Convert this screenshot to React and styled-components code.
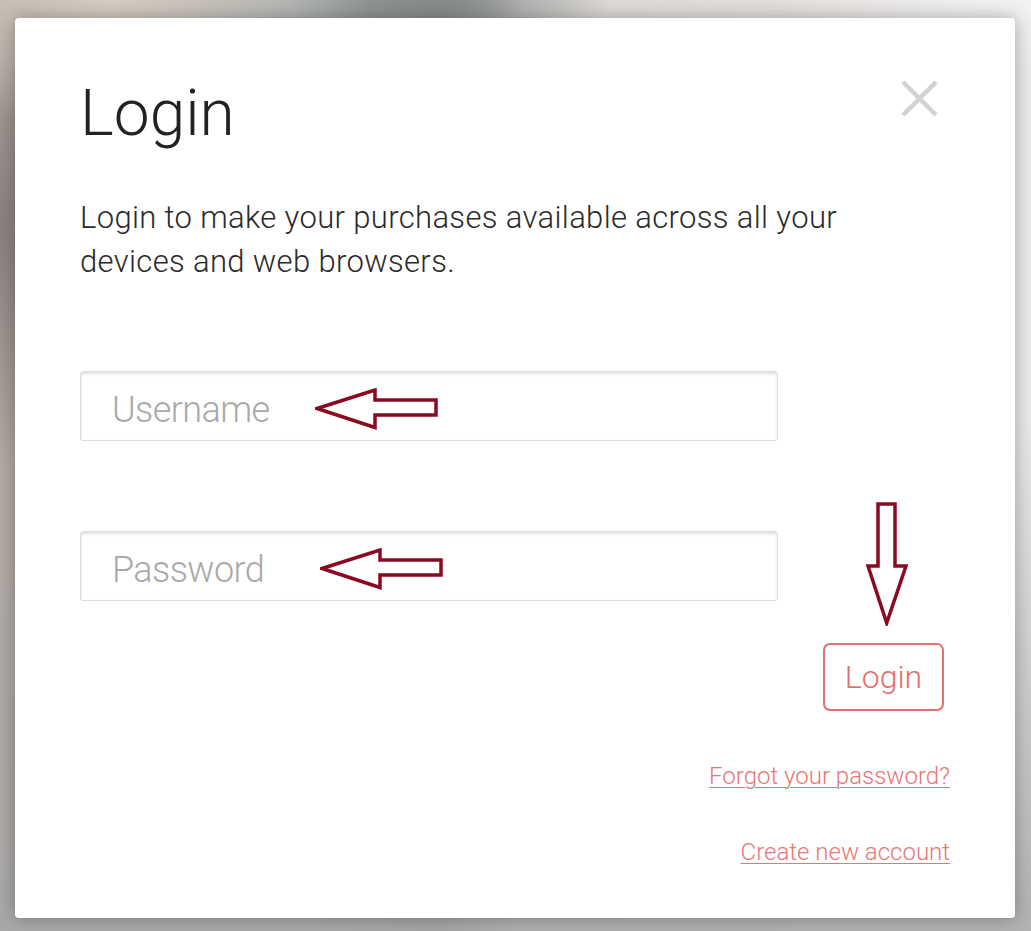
import React from 'react';
import styled, { createGlobalStyle } from 'styled-components';

const GlobalStyle = createGlobalStyle`
  html, body {
    margin: 0;
    padding: 0;
  }
  body {
    font-family: Roboto, 'Liberation Sans', sans-serif;
  }
  * {
    box-sizing: border-box;
  }
`;

const ARROW_RED = '#8b0a1f';
const LINK_RED = '#e77676';

const Page = styled.div`
  width: 1031px;
  height: 931px;
  overflow: hidden;
  padding: 18px 16px 13px 15px;
  background:
    radial-gradient(ellipse 260px 130px at 110px 0px, #d6cdc2 0%, rgba(214, 205, 194, 0) 100%),
    radial-gradient(ellipse 110px 240px at 0px 230px, #8a807e 0%, rgba(138, 128, 126, 0) 100%),
    radial-gradient(ellipse 170px 70px at 440px 0px, #868b8b 0%, rgba(134, 139, 139, 0) 100%),
    radial-gradient(ellipse 260px 80px at 1031px 0px, #f2f2f2 0%, rgba(242, 242, 242, 0) 100%),
    linear-gradient(180deg, rgba(160, 160, 160, 0) 0px, rgba(160, 160, 160, 0) 420px, rgba(168, 168, 168, 0.85) 931px),
    linear-gradient(90deg, #b4aaa4 0px, #a6adb0 300px, #8f9192 440px, #dcd8d5 520px, #e5e1df 900px, #e9e9e9 1031px);
`;

const Modal = styled.div`
  width: 1000px;
  height: 900px;
  background: #fff;
  border-radius: 4px;
  box-shadow: 0 0 18px rgba(0, 0, 0, 0.3);
  padding: 62px 65px 0;
  display: flex;
  flex-direction: column;
`;

const Header = styled.div`
  display: flex;
  justify-content: space-between;
  align-items: flex-start;
`;

const Title = styled.h1`
  margin: 0;
  font-size: 64px;
  line-height: 67px;
  font-weight: 300;
  color: #222;
`;

const CloseButton = styled.button`
  border: 0;
  background: none;
  padding: 0;
  margin: 0 12px 0 0;
  width: 37px;
  height: 37px;
  cursor: pointer;
  display: flex;
`;

const Description = styled.p`
  margin: 49px 0 0;
  max-width: 820px;
  font-size: 31px;
  line-height: 44px;
  letter-spacing: 0.35px;
  font-weight: 300;
  color: #2a2a2a;
`;

const Form = styled.form`
  margin-top: 87px;
  display: flex;
  flex-direction: column;
`;

const Field = styled.div`
  position: relative;
  width: 698px;
  & + & {
    margin-top: 90px;
  }
`;

const Input = styled.input`
  width: 100%;
  height: 70px;
  border: 1px solid #dcdcdc;
  border-radius: 3px;
  box-shadow: inset 0 2px 3px rgba(0, 0, 0, 0.12);
  padding: 8px 0 0 31px;
  font-family: Roboto, 'Liberation Sans', sans-serif;
  font-size: 36px;
  font-weight: 300;
  color: #333;
  outline: none;

  &::placeholder {
    color: #a9a9a9;
    letter-spacing: -0.6px;
  }
`;

const Pointer = styled.svg`
  position: absolute;
  top: 17px;
  left: ${(p) => p.$left}px;
  pointer-events: none;
`;

const Actions = styled.div`
  display: flex;
  flex-direction: column;
  align-items: flex-end;
  margin-top: 42px;
`;

const SubmitWrap = styled.div`
  position: relative;
  margin-right: 6px;
`;

const DownPointer = styled.svg`
  position: absolute;
  left: 43px;
  top: -141px;
  pointer-events: none;
`;

const SubmitButton = styled.button`
  width: 121px;
  height: 68px;
  border: 2px solid #e46f6f;
  border-radius: 7px;
  background: #fff;
  color: #e46f6f;
  font-family: Roboto, 'Liberation Sans', sans-serif;
  font-size: 32px;
  font-weight: 300;
  padding: 0;
  cursor: pointer;
`;

const TextLink = styled.a`
  display: block;
  margin-top: ${(p) => p.$gap}px;
  font-size: 24px;
  line-height: 30px;
  font-weight: 300;
  color: ${LINK_RED};
  text-decoration: underline;
  text-underline-offset: 3px;
  text-decoration-thickness: 1px;
  cursor: pointer;
`;

function LeftArrow({ left }) {
  return (
    <Pointer $left={left} width="124" height="42" viewBox="0 0 124 42">
      <polygon
        points="2,20.5 60,2 60,12 121,12 121,27 60,27 60,39.5"
        fill="#fff"
        stroke={ARROW_RED}
        strokeWidth="3.5"
        strokeLinejoin="miter"
      />
    </Pointer>
  );
}

function DownArrow() {
  return (
    <DownPointer width="42" height="124" viewBox="0 0 42 124">
      <polygon
        points="12,2 29,2 29,64 40,64 20.7,121 2,64 12,64"
        fill="#fff"
        stroke={ARROW_RED}
        strokeWidth="3.5"
        strokeLinejoin="miter"
      />
    </DownPointer>
  );
}

export default function App() {
  return (
    <>
      <GlobalStyle />
      <Page>
        <Modal>
          <Header>
            <Title>Login</Title>
            <CloseButton type="button" aria-label="Close">
              <svg width="37" height="37" viewBox="0 0 37 37">
                <path d="M2 2 L35 35 M35 2 L2 35" stroke="#d2d2d2" strokeWidth="4.5" />
              </svg>
            </CloseButton>
          </Header>
          <Description>
            Login to make your purchases available across all your devices and web browsers.
          </Description>
          <Form onSubmit={(e) => e.preventDefault()}>
            <Field>
              <Input type="text" placeholder="Username" />
              <LeftArrow left={235} />
            </Field>
            <Field>
              <Input type="password" placeholder="Password" />
              <LeftArrow left={240} />
            </Field>
            <Actions>
              <SubmitWrap>
                <DownArrow />
                <SubmitButton type="submit">Login</SubmitButton>
              </SubmitWrap>
              <TextLink $gap={50}>Forgot your password?</TextLink>
              <TextLink $gap={46}>Create new account</TextLink>
            </Actions>
          </Form>
        </Modal>
      </Page>
    </>
  );
}
